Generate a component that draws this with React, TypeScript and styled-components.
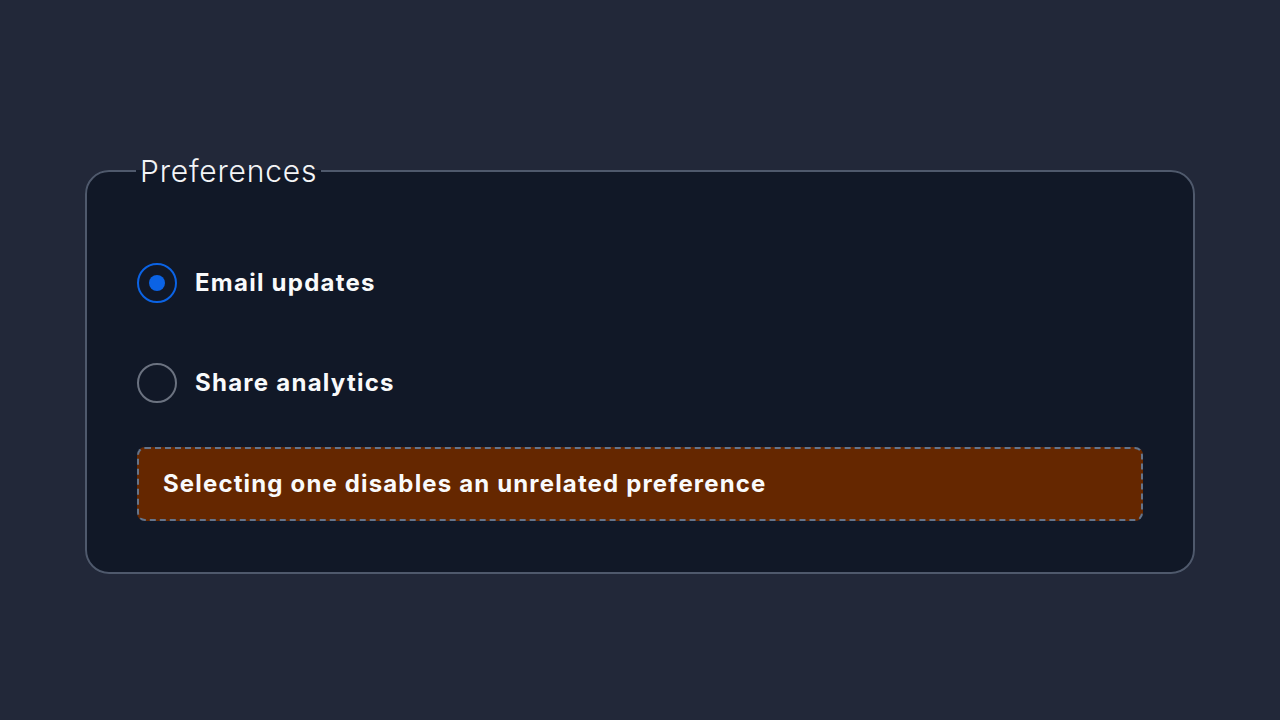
import React, { useState } from 'react'
import styled, { createGlobalStyle } from 'styled-components'

const GlobalStyle = createGlobalStyle`
  html, body {
    margin: 0;
    padding: 0;
    background: #222839;
  }
  body {
    font-family: Inter, 'Open Sans', sans-serif;
  }
`

const Page = styled.div`
  min-height: 100vh;
  padding-top: 6px;
  display: flex;
  align-items: center;
  justify-content: center;
  box-sizing: border-box;
`

const Group = styled.fieldset`
  width: 1110px;
  box-sizing: border-box;
  margin: 0;
  padding: 56px 50px 51px 50px;
  border: 2px solid #4f596c;
  border-radius: 24px;
  background: #111827;
  display: flex;
  flex-direction: column;
`

const Legend = styled.legend`
  margin-left: -1px;
  padding: 0 4px;
  font-family: Inter, 'Open Sans', sans-serif;
  font-size: 30px;
  font-weight: 300;
  letter-spacing: 0.8px;
  line-height: 36px;
  color: #f3f4f6;
`

const Options = styled.div`
  display: flex;
  flex-direction: column;
  gap: 60px;
  padding-top: 18px;
`

const Option = styled.label`
  display: flex;
  align-items: center;
  gap: 18px;
  cursor: pointer;
`

const Circle = styled.span<{ $checked: boolean }>`
  width: 40px;
  height: 40px;
  box-sizing: border-box;
  border-radius: 50%;
  border: 2px solid ${(p) => (p.$checked ? '#0b63e5' : '#6b7280')};
  display: flex;
  align-items: center;
  justify-content: center;
  flex-shrink: 0;

  &::after {
    content: '';
    width: 16px;
    height: 16px;
    border-radius: 50%;
    background: #0b63e5;
    display: ${(p) => (p.$checked ? 'block' : 'none')};
  }
`

const HiddenInput = styled.input`
  position: absolute;
  opacity: 0;
  width: 0;
  height: 0;
`

const OptionText = styled.span`
  font-size: 24px;
  font-weight: 700;
  letter-spacing: 1.25px;
  color: #f9fafb;
  line-height: 40px;
`

const Note = styled.div`
  margin-top: 44px;
  padding: 0 24px;
  height: 74px;
  box-sizing: border-box;
  display: flex;
  align-items: center;
  border: 2px dashed #64748b;
  border-radius: 8px;
  background: #652700;
  font-size: 24px;
  font-weight: 700;
  letter-spacing: 1.15px;
  color: #f9fafb;
`

const options = [
  { id: 'email', label: 'Email updates' },
  { id: 'analytics', label: 'Share analytics' },
]

const App: React.FC = () => {
  const [selected, setSelected] = useState('email')

  return (
    <>
      <GlobalStyle />
      <Page>
        <Group>
          <Legend>Preferences</Legend>
          <Options>
            {options.map((opt) => (
              <Option key={opt.id}>
                <HiddenInput
                  type="radio"
                  name="prefs"
                  checked={selected === opt.id}
                  onChange={() => setSelected(opt.id)}
                />
                <Circle $checked={selected === opt.id} />
                <OptionText>{opt.label}</OptionText>
              </Option>
            ))}
          </Options>
          <Note>Selecting one disables an unrelated preference</Note>
        </Group>
      </Page>
    </>
  )
}

export default App
